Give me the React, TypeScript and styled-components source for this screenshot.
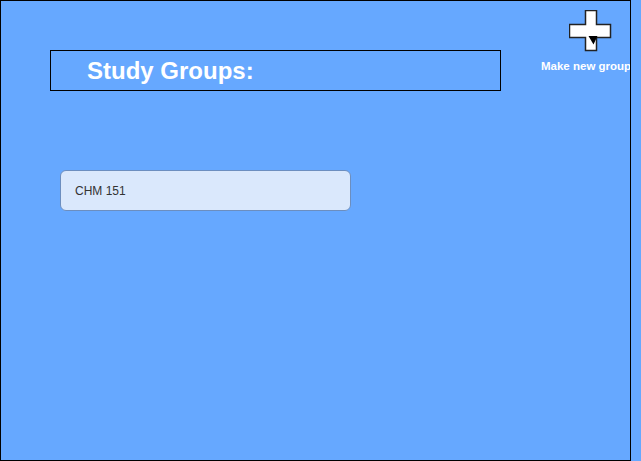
import React from "react";
import styled, { createGlobalStyle } from "styled-components";

const GlobalStyle = createGlobalStyle`
  html, body {
    margin: 0;
    padding: 0;
    background: #66a8ff;
    font-family: "Liberation Sans", Arial, sans-serif;
  }
`;

const Frame = styled.div`
  box-sizing: border-box;
  width: 631px;
  height: 461px;
  border: 1px solid #000;
  background: #66a8ff;
  overflow: hidden;
  display: flex;
  flex-direction: column;
`;

const Header = styled.div`
  display: flex;
  align-items: flex-start;
  padding: 9px 0 0 49px;
`;

const TitleBox = styled.div`
  box-sizing: border-box;
  flex: 0 0 451px;
  width: 451px;
  height: 41px;
  margin-top: 40px;
  border: 1px solid #000;
  display: flex;
  align-items: center;
  padding-left: 36px;
`;

const Title = styled.h1`
  margin: 0;
  font-size: 24px;
  font-weight: bold;
  color: #fff;
  line-height: 1;
`;

const NewGroup = styled.button`
  flex: 0 0 auto;
  display: flex;
  flex-direction: column;
  align-items: flex-start;
  margin-left: 40px;
  padding: 0;
  border: 0;
  background: none;
  cursor: pointer;
`;

const PlusIcon = styled.svg`
  display: block;
  margin-left: 28px;
`;

const NewGroupLabel = styled.span`
  margin-top: 8px;
  font-family: "Liberation Sans", Arial, sans-serif;
  font-size: 11.5px;
  font-weight: bold;
  color: #fff;
  white-space: nowrap;
  line-height: 13px;
`;

const GroupList = styled.div`
  display: flex;
  flex-direction: column;
  padding: 79px 0 0 59px;
`;

const GroupCard = styled.div`
  box-sizing: border-box;
  width: 291px;
  height: 41px;
  border: 1px solid #6c8ebf;
  border-radius: 6px;
  background: #dae8fc;
  display: flex;
  align-items: center;
  padding-left: 14px;
  font-size: 12px;
  color: #333;
`;

export default function App() {
  return (
    <>
      <GlobalStyle />
      <Frame>
        <Header>
          <TitleBox>
            <Title>Study Groups:</Title>
          </TitleBox>
          <NewGroup>
            <PlusIcon width="43" height="42" viewBox="0 0 43 42">
              <polygon
                points="16.5,0.5 27.5,0.5 27.5,14.5 41.5,14.5 41.5,27.5 27.5,27.5 27.5,40.5 16.5,40.5 16.5,27.5 0.5,27.5 0.5,14.5 16.5,14.5"
                fill="#fff"
                stroke="#222"
                strokeWidth="1.5"
              />
              <polygon points="19.5,26 28.5,26 24.5,34.5" fill="#000" />
            </PlusIcon>
            <NewGroupLabel>Make new group</NewGroupLabel>
          </NewGroup>
        </Header>
        <GroupList>
          <GroupCard>CHM 151</GroupCard>
        </GroupList>
      </Frame>
    </>
  );
}
